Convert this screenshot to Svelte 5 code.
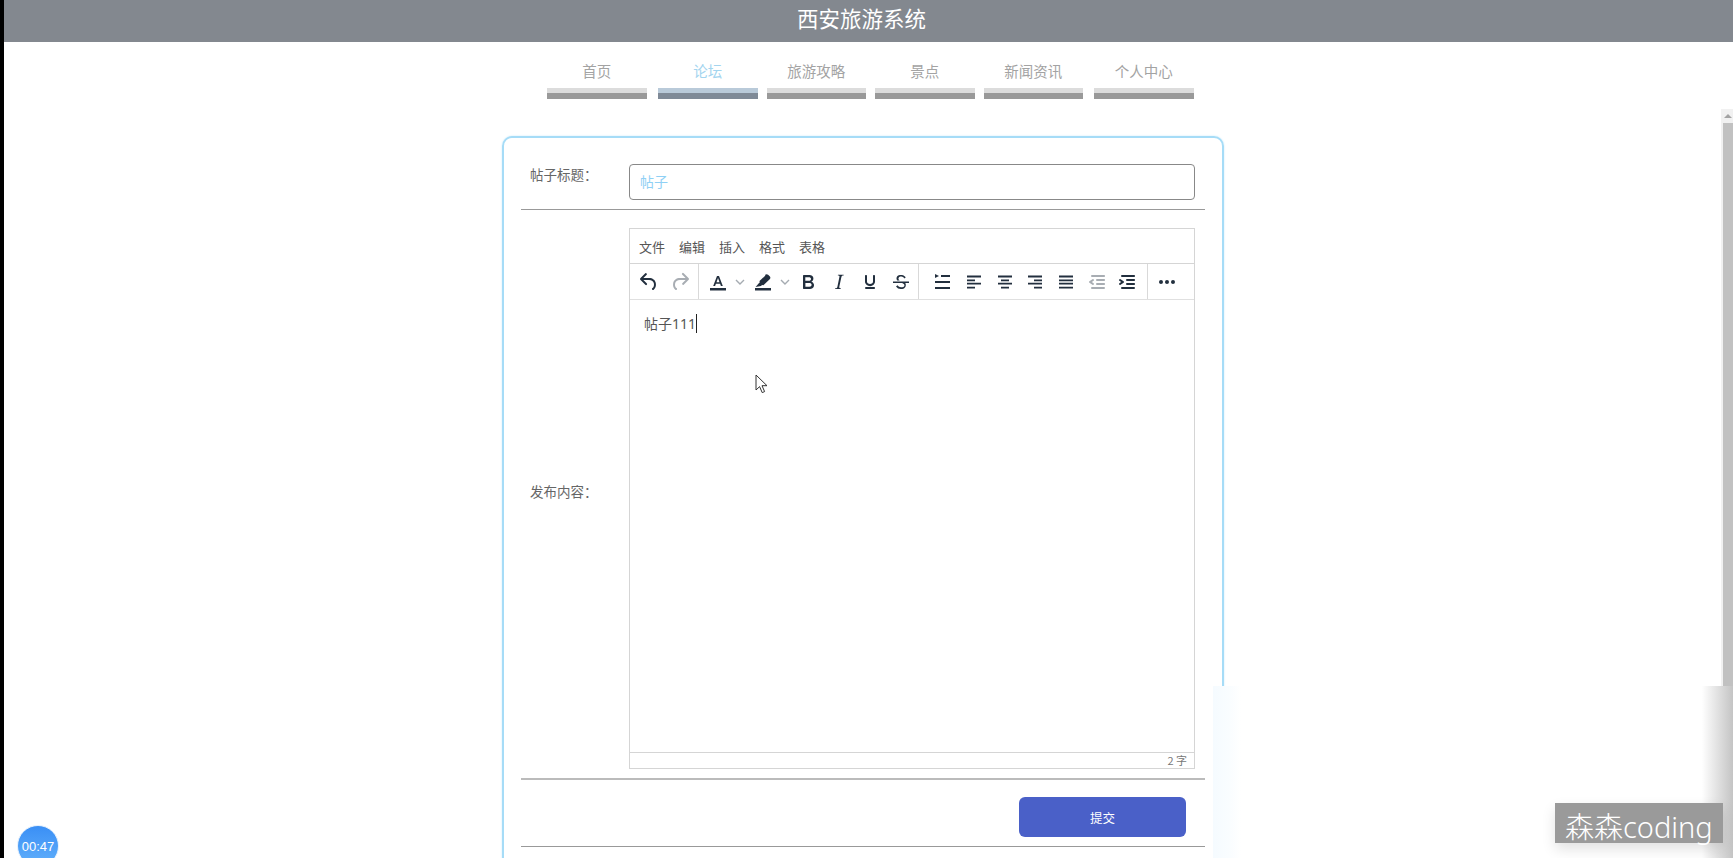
<script>
  const navItems = ['首页', '论坛', '旅游攻略', '景点', '新闻资讯', '个人中心']
  const menus = ['文件', '编辑', '插入', '格式', '表格']

  const icons = {
    undo: 'M6.4 8H12c3.7 0 6.2 2 6.8 5.1.6 2.7-.4 5.6-2.3 6.8a1 1 0 0 1-1-1.8c1.1-.6 1.8-2.7 1.4-4.6-.5-2.1-2.1-3.5-4.9-3.5H6.4l3.3 3.3a1 1 0 1 1-1.4 1.4l-5-5a1 1 0 0 1 0-1.4l5-5a1 1 0 0 1 1.4 1.4L6.4 8z',
    redo: 'M17.6 10H12c-2.8 0-4.4 1.4-4.9 3.5-.4 2 .3 4 1.4 4.6a1 1 0 1 1-1 1.8c-2-1.2-2.9-4.1-2.3-6.8.6-3 3-5.1 6.8-5.1h5.6l-3.3-3.3a1 1 0 1 1 1.4-1.4l5 5a1 1 0 0 1 0 1.4l-5 5a1 1 0 0 1-1.4-1.4l3.3-3.3z',
    color: 'M4 18h16v2.6H4zM11 6h2l3.8 10h-1.9l-.8-2.3H9.9L9.1 16H7.2L11 6zm-.5 6.2h3L12 8l-1.5 4.2z',
    mark: 'M4 18h16v2.6H4zM14.2 4.8c.9-.8 2-.8 2.9 0l1.6 1.5c.9.9.9 2.1 0 3l-6.3 6-1.4-.2-1 1-5.4.9 3.2-3.7.9-.9-.2-1.5 5.7-5.1z',
    bold: 'M7.8 19c-.3 0-.5 0-.6-.2l-.2-.5V5.7c0-.2 0-.4.2-.5l.6-.2h5c1.5 0 2.7.3 3.5 1 .7.6 1.1 1.4 1.1 2.5a3 3 0 0 1-.6 1.9c-.4.6-1 1-1.6 1.2.4.1.9.3 1.3.6s.8.7 1 1.2c.4.4.5 1 .5 1.6 0 1.3-.4 2.3-1.3 3-.8.7-2.1 1-3.8 1H7.8zm5-8.3c.6 0 1.2-.1 1.6-.5.4-.3.6-.7.6-1.3 0-1.1-.8-1.7-2.4-1.7H9.3v3.5h3.4zm.5 6c.7 0 1.3-.1 1.7-.4.4-.4.6-.9.6-1.5s-.2-1-.7-1.4c-.4-.3-1-.4-2-.4H9.4v3.8h4z',
    italic: 'M16.7 4.7l-.1.9h-.3c-.6 0-1 0-1.4.3-.3.3-.4.6-.5 1.1l-2.1 9.8v.6c0 .5.4.8 1.4.8h.2l-.2.8H8l.2-.8h.2c1.1 0 1.8-.5 2-1.5l2-9.8.1-.5c0-.6-.4-.8-1.4-.8h-.3l.2-.9h5.8z',
    underline: 'M16 5c.6 0 1 .4 1 1v5.5a4 4 0 0 1-.4 1.8l-1 1.4a5.3 5.3 0 0 1-5.5 1 5 5 0 0 1-1.6-1c-.5-.4-.8-.9-1.1-1.4a4 4 0 0 1-.4-1.8V6c0-.6.4-1 1-1s1 .4 1 1v5.5c0 .3 0 .6.2 1l.6.7a3.3 3.3 0 0 0 2.2.8 3.4 3.4 0 0 0 2.2-.8c.3-.2.4-.5.6-.8l.2-.9V6c0-.6.4-1 1-1zM8 17h8c.6 0 1 .4 1 1s-.4 1-1 1H8a1 1 0 0 1 0-2z',
    strike: 'M15.6 8.5c-.5-.7-1-1.1-1.3-1.3-.6-.4-1.3-.6-2-.6-2.7 0-2.8 1.7-2.8 2.1 0 .9.6 1.5 1.4 1.8H8.2c-.4-.5-.7-1.1-.7-1.9 0-1.2.5-2.2 1.3-2.9C9.2 5.6 10.3 5 12 5c1.5 0 2.6.5 3.2.9.5.3 1 .8 1.5 1.4l-1.1 1.2zM4 11.5h16V13h-3.7c.4.7.5 1.4.5 2 0 1.4-.7 4.1-5 4.1A6.2 6.2 0 0 1 7 16.4l1.5-1.1c.4.6 1.6 2 3.7 2 1.6 0 2.5-.4 3-1 .5-.8.3-2-1.3-2.7l-.7-.6H4z',
    lineheight: 'M5 4v4l4-2zM11 5h9v2h-9zM5 11h15v2H5zM5 17h15v2H5z',
    left: 'M5 5.6h14v1.8H5zM5 9.4h8v1.8H5zM5 12.8h14v1.8H5zM5 16.8h8v1.8H5z',
    center: 'M5 5.6h14v1.8H5zM8 9.4h8v1.8H8zM5 12.8h14v1.8H5zM8 16.8h8v1.8H8z',
    right: 'M5 5.6h14v1.8H5zM11 9.4h8v1.8h-8zM5 12.8h14v1.8H5zM11 16.8h8v1.8h-8z',
    justify: 'M5 5.6h14v1.8H5zM5 9.4h14v1.8H5zM5 12.8h14v1.8H5zM5 16.8h14v1.8H5z',
    outdent: 'M7 5h12c.6 0 1 .4 1 1s-.4 1-1 1H7a1 1 0 1 1 0-2zm5 4h7c.6 0 1 .4 1 1s-.4 1-1 1h-7a1 1 0 0 1 0-2zm0 4h7c.6 0 1 .4 1 1s-.4 1-1 1h-7a1 1 0 0 1 0-2zm-5 4h12a1 1 0 0 1 0 2H7a1 1 0 0 1 0-2zm1.6-3.8a1 1 0 1 1-1.2 1.6l-3-2a1 1 0 0 1 0-1.6l3-2a1 1 0 1 1 1.2 1.6L6.8 12l1.8 1.2z',
    indent: 'M7 5h12c.6 0 1 .4 1 1s-.4 1-1 1H7a1 1 0 1 1 0-2zm5 4h7c.6 0 1 .4 1 1s-.4 1-1 1h-7a1 1 0 0 1 0-2zm0 4h7c.6 0 1 .4 1 1s-.4 1-1 1h-7a1 1 0 0 1 0-2zm-5 4h12a1 1 0 0 1 0 2H7a1 1 0 0 1 0-2zm-2.6-3.8L6.2 12l-1.8-1.2a1 1 0 0 1 1.2-1.6l3 2a1 1 0 0 1 0 1.6l-3 2a1 1 0 1 1-1.2-1.6z',
    more: 'M6 10a2 2 0 0 0-2 2c0 1.1.9 2 2 2a2 2 0 0 0 2-2 2 2 0 0 0-2-2zm12 0a2 2 0 0 0-2 2c0 1.1.9 2 2 2a2 2 0 0 0 2-2 2 2 0 0 0-2-2zm-6 0a2 2 0 0 0-2 2c0 1.1.9 2 2 2a2 2 0 0 0 2-2 2 2 0 0 0-2-2z'
  }
</script>

{#snippet tool(name, off = false)}
  <span class="tool" class:off>
    <svg width="24" height="24" viewBox="0 0 24 24"><path d={icons[name]} /></svg>
  </span>
{/snippet}

{#snippet chevron()}
  <span class="chev">
    <svg width="10" height="10" viewBox="0 0 10 10"><path d="M1 3l4 4 4-4" /></svg>
  </span>
{/snippet}

<div class="page">
  <div class="edge"></div>

  <div class="main">
    <header class="top">西安旅游系统</header>

    <nav class="nav">
      {#each navItems as item, i}
        <div class="nav-item" class:active={i === 1}>
          <span class="nav-text">{item}</span>
          <span class="nav-bar"></span>
        </div>
      {/each}
    </nav>

    <div class="card">
      <div class="row title-row">
        <span class="label">帖子标题：</span>
        <input class="title-input" value="帖子" />
      </div>

      <div class="row content-row">
        <span class="label">发布内容：</span>
        <div class="editor">
          <div class="menubar">
            {#each menus as m}
              <span class="menu">{m}</span>
            {/each}
          </div>
          <div class="toolbar">
            <div class="group first">
              {@render tool('undo')}
              {@render tool('redo', true)}
            </div>
            <div class="group second">
              {@render tool('color')}
              {@render chevron()}
              {@render tool('mark')}
              {@render chevron()}
              {@render tool('bold')}
              {@render tool('italic')}
              {@render tool('underline')}
              {@render tool('strike')}
            </div>
            <div class="group third">
              {@render tool('lineheight')}
              {@render tool('left')}
              {@render tool('center')}
              {@render tool('right')}
              {@render tool('justify')}
              {@render tool('outdent', true)}
              {@render tool('indent')}
            </div>
            <div class="group last">
              {@render tool('more')}
            </div>
          </div>
          <div class="body"><span class="typed">帖子111</span><span class="caret"></span></div>
          <div class="status">2 字</div>
        </div>
      </div>

      <div class="row submit-row">
        <button class="submit">提交</button>
      </div>
    </div>
  </div>

  <!-- screen recording leftovers on top of the page -->
  <div class="scrollbar">
    <span class="scroll-up"></span>
    <span class="scroll-thumb"></span>
  </div>

  <div class="patch"></div>

  <div class="watermark">森森coding</div>

  <div class="timer">00:47</div>

  <svg class="pointer" width="13" height="20" viewBox="0 0 13 20">
    <path d="M1 1v15l3.6-3.4 2.6 6 2.4-1-2.6-5.9H12z" />
  </svg>
</div>

<style>
  :global(body) {
    margin: 0;
    background: #fff;
  }

  .page {
    position: relative;
    display: flex;
    height: 858px;
    overflow: hidden;
    background: #fff;
    font-family: "Noto Sans CJK SC", "Liberation Sans", sans-serif;
  }

  .edge {
    flex: 0 0 4px;
    background: #000;
  }

  .main {
    flex: 1;
    min-width: 0;
  }

  .top {
    height: 42px;
    padding-right: 14px;
    background: #83888f;
    color: #fff;
    font-size: 21.5px;
    line-height: 36px;
    text-align: center;
  }

  .nav {
    display: flex;
    padding-left: 543px;
    margin-bottom: 37px;
  }

  .nav-item {
    display: flex;
    flex-direction: column;
    width: 99.5px;
    margin-right: 9px;
    color: #a3a3a3;
    font-size: 14.5px;
    text-align: center;
  }

  .nav-item:first-child {
    margin-right: 11.5px;
  }

  .nav-item:nth-child(5) {
    margin-right: 11px;
  }

  .nav-text {
    height: 46px;
    line-height: 58px;
  }

  .nav-bar {
    height: 11px;
    background: linear-gradient(#dcdcdc 50%, #999 50%);
  }

  .nav-item.active {
    color: #a4d5ef;
  }

  .nav-item.active .nav-bar {
    background: linear-gradient(#b9cad9 50%, #7f8a97 50%);
  }

  .card {
    box-sizing: border-box;
    width: 722px;
    height: 800px;
    margin-left: 498px;
    padding: 0 17px;
    border: 2px solid #a6dcf7;
    border-radius: 10px;
    box-shadow: 0 0 2px #c5e9fb;
  }

  .row {
    display: flex;
    padding-left: 9px;
    padding-right: 10px;
    color: #666;
    font-size: 13.5px;
  }

  .label {
    width: 99px;
    flex: none;
    line-height: 20px;
  }

  .title-row {
    padding-top: 26px;
    padding-bottom: 9px;
    border-bottom: 1px solid #999;
  }

  .title-input {
    box-sizing: border-box;
    width: 566px;
    height: 36px;
    padding: 0 10px 2px;
    border: 1px solid #888;
    border-radius: 4px;
    outline: none;
    color: #8fd0f5;
    font: 14px "Noto Sans CJK SC", sans-serif;
  }

  .content-row {
    align-items: center;
    padding-top: 18px;
    padding-bottom: 9px;
    border-bottom: 2px solid #bbb;
  }

  .content-row .label {
    margin-bottom: 15px;
  }

  .editor {
    box-sizing: border-box;
    display: flex;
    flex-direction: column;
    width: 566px;
    height: 541px;
    border: 1px solid #d5d5d5;
  }

  .menubar {
    display: flex;
    align-items: center;
    height: 34px;
    padding-left: 2px;
    border-bottom: 1px solid #d5d5d5;
  }

  .menu {
    padding: 0 7px;
    color: #555;
    font-size: 13px;
  }

  .toolbar {
    display: flex;
    height: 35px;
    border-bottom: 1px solid #e0e0e0;
  }

  .group {
    display: flex;
    align-items: center;
    border-right: 1px solid #d9d9d9;
  }

  .group.first {
    width: 69px;
    padding-left: 3px;
    box-sizing: border-box;
  }

  .group.second {
    width: 220px;
    padding-left: 3px;
    box-sizing: border-box;
  }

  .group.third {
    width: 229px;
    padding-left: 6px;
    box-sizing: border-box;
  }

  .group.third .tool {
    width: 30.7px;
  }

  .group.third .tool:first-child {
    width: 33.5px;
  }

  .group.last {
    padding-left: 3px;
    border-right: 0;
  }

  .tool {
    display: flex;
    justify-content: center;
    align-items: center;
    width: 31px;
    height: 34px;
    flex: none;
  }

  .tool svg {
    fill: #222f3e;
  }

  .tool.off svg {
    fill: #a8adb3;
  }

  .chev {
    display: flex;
    justify-content: center;
    align-items: center;
    width: 14px;
    height: 34px;
    flex: none;
  }

  .chev svg {
    fill: none;
    stroke: #a5abb1;
    stroke-width: 1.4;
  }

  .body {
    flex: 1;
    display: flex;
    align-items: flex-start;
    padding: 14px 0 0 14px;
    color: #555;
    font-size: 14px;
    line-height: 20px;
  }

  .typed {
    font-family: "Noto Sans", "Noto Sans CJK SC", sans-serif;
  }

  .caret {
    width: 1px;
    height: 19px;
    background: #222;
  }

  .status {
    height: 15px;
    padding-right: 7px;
    border-top: 1px solid #d5d5d5;
    color: #777;
    font-size: 11px;
    line-height: 15px;
    text-align: right;
  }

  .submit-row {
    justify-content: flex-end;
    padding-top: 17px;
    padding-bottom: 9px;
    padding-right: 19px;
    border-bottom: 1px solid #999;
  }

  .submit {
    width: 167px;
    height: 40px;
    border: 0;
    border-radius: 6px;
    background: #4a60c8;
    color: #fff;
    font: 12.5px "Noto Sans CJK SC", sans-serif;
  }

  .scrollbar {
    position: absolute;
    top: 109px;
    right: 0;
    bottom: 0;
    width: 12px;
    background: #f1f1f1;
  }

  .scroll-up {
    position: absolute;
    top: 5px;
    left: 3px;
    border: 4px solid transparent;
    border-top: 0;
    border-bottom: 4px solid #a3a3a3;
  }

  .scroll-thumb {
    position: absolute;
    top: 14px;
    right: 0;
    bottom: 0;
    width: 10px;
    background: #c1c1c1;
  }

  .patch {
    position: absolute;
    left: 1213px;
    right: 0;
    top: 686px;
    bottom: 0;
    background: linear-gradient(to right, #f5fbff 0, #fafdff 18px, #fff 28px, #fff 94%, #c4c4c4 100%);
  }

  .watermark {
    position: absolute;
    left: 1555px;
    top: 803px;
    box-sizing: border-box;
    width: 168px;
    height: 40px;
    padding-left: 10px;
    background: #9a9a9a;
    box-shadow: 0 6px 14px rgba(0, 0, 0, 0.12);
    color: #fff;
    font-family: "Noto Sans", "Noto Sans CJK SC", sans-serif;
    font-size: 29px;
    font-weight: 300;
    line-height: 48px;
    white-space: nowrap;
  }

  .timer {
    position: absolute;
    left: 17px;
    top: 825px;
    box-sizing: border-box;
    width: 42px;
    height: 42px;
    border: 1px solid #e4f0fd;
    border-radius: 50%;
    background: linear-gradient(#3a8ff5, #62b0fb);
    color: #fff;
    font: 13px/42px "Liberation Sans", sans-serif;
    text-align: center;
  }

  .pointer {
    position: absolute;
    left: 755px;
    top: 374px;
  }

  .pointer path {
    fill: #fff;
    stroke: #333;
    stroke-width: 1;
  }
</style>
